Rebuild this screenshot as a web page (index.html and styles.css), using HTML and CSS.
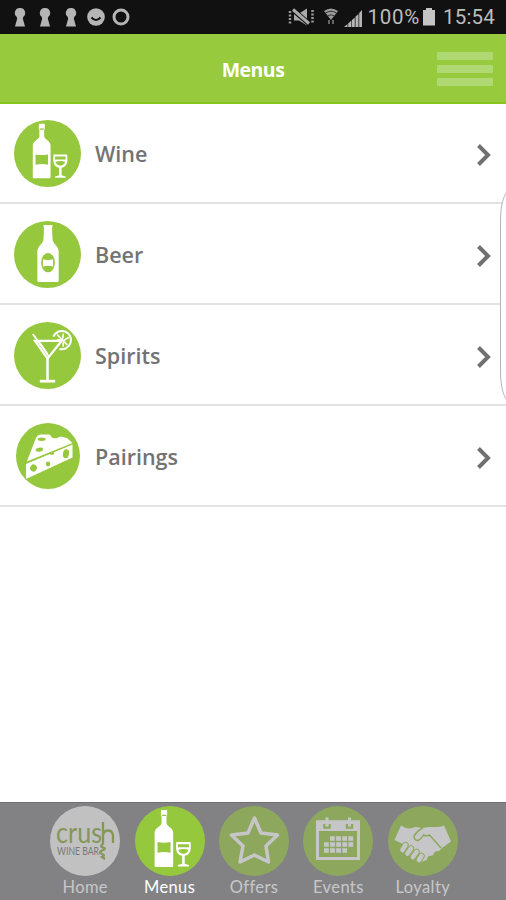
FILE: index.html
```
<!DOCTYPE html>
<html lang="en">
<head>
    <meta charset="UTF-8">
    <title>Menus</title>
    <link rel="stylesheet" href="styles.css">
</head>
<body>

<svg class="defs" width="0" height="0">
    <symbol id="wine" viewBox="0 0 66 66">
        <path fill="#fff" d="M24.500 3.700h5.800v5.300l-.6 1v6c0 3 6.300 4.500 6.300 9v31.500q0 1-1 1h-15.500q-1 0-1-1v-31.500c0-4.500 6.500-6 6.500-9v-6l-.6-1z"/>
        <path fill="#96c83e" d="M25.300 8.300h4.400v1.200h-4.400zM21.200 34q6 1.200 12.300 0v10q-6-1.200-12.300 0z"/>
        <path fill="#fff" d="M39 34h13.300c1 7 .2 12-5.400 13v7.500l4 1.200v1.300h-10.500v-1.300l4-1.200v-7.500c-5.600-1-6.400-6-5.400-13z"/>
        <path fill="#96c83e" d="M40.500 36h10.300l.1 3h-10.500zM41 41.200q4.700-1.500 9.300 0c-.7 5-8.600 5-9.300 0z"/>
    </symbol>
    <symbol id="keyhole" viewBox="0 0 12 19">
        <path fill="#b5b5b5" d="M6 0a5 5 0 0 1 3.400 8.800l-.6 1.700 2.200 8h-10l2.200-8-.6-1.700a5 5 0 0 1 3.400-8.800z"/>
    </symbol>
    <symbol id="chevron" viewBox="0 0 14 22">
        <path d="M1.500 1.500 11 11 1.500 20.500" fill="none" stroke="#707070" stroke-width="4"/>
    </symbol>
</svg>

<div class="app">
    <div class="status">
        <div class="notifications">
            <svg width="12" height="19"><use href="#keyhole"/></svg>
            <svg width="12" height="19"><use href="#keyhole"/></svg>
            <svg width="12" height="19"><use href="#keyhole"/></svg>
            <svg width="18" height="18" viewBox="0 0 18 18">
                <circle cx="9" cy="9" r="8.800" fill="#b5b5b5"/>
                <path d="M4.500 9.500q4.500 5 9 0" fill="none" stroke="#111" stroke-width="2"/>
            </svg>
            <svg class="ring" width="18" height="18" viewBox="0 0 18 18">
                <circle cx="9" cy="9" r="7" fill="none" stroke="#b5b5b5" stroke-width="3"/>
            </svg>
        </div>
        <div class="system">
            <svg class="mute" width="27" height="18" viewBox="0 0 27 18">
                <path fill="#aaa" d="M6 5.500h5l8-5v17l-8-5h-5z"/>
                <path d="M4 1 22 16.500" stroke="#111" stroke-width="5"/>
                <path d="M5 1.500 21 15.500" stroke="#aaa" stroke-width="3"/>
                <path d="M2 3v13M24.500 2v14" stroke="#999" stroke-width="2.500" stroke-dasharray="2 1.500"/>
            </svg>
            <svg class="wifi" width="16" height="18" viewBox="0 0 16 18">
                <path fill="#9a9a9a" d="M1 3q7-5 14 0l-7 9z"/>
                <path d="M2.500 5q5.500-3.500 11 0M4.500 8q3.500-2.500 7 0" fill="none" stroke="#333"/>
                <path d="M6 12v4M10 12v4" stroke="#666" stroke-width="2"/>
            </svg>
            <svg class="signal" width="19" height="19" viewBox="0 0 19 19">
                <path fill="#b5b5b5" d="M0 18l3.500-3v3zM4.200 14.500l3.200-3v6.500h-3.200zM8 11l2.800-2.500v9.500H8zM11.500 7.500l3-2.500v13h-3zM15.200 4l2.800-3v17h-2.800z"/>
            </svg>
            <span class="percent">100%</span>
            <svg class="battery" width="12" height="18" viewBox="0 0 12 18">
                <path fill="#c4c4c4" d="M3 0h6v2h3v15.500H0V2h3z"/>
            </svg>
            <span class="clock">15:54</span>
        </div>
    </div>

    <div class="header">
        <h1>Menus</h1>
        <div class="burger"><i></i><i></i><i></i></div>
    </div>

    <div class="list">
        <div class="row">
            <div class="disc"><svg viewBox="0 0 66 66"><use href="#wine"/></svg></div>
            <span class="wine">Wine</span>
            <svg class="arrow"><use href="#chevron"/></svg>
        </div>
        <div class="row">
            <div class="disc">
                <svg viewBox="0 0 66 66">
                    <path fill="#fff" d="M29 4h9l-.5 3.500.5 11c.5 4 6 6.500 6 11.500v28.500q0 1.500-1.500 1.500h-18q-1.500 0-1.500-1.500v-28.500c0-5 5.500-7.500 6-11.500l.5-11z"/>
                    <ellipse cx="33.500" cy="41" rx="6.800" ry="9.500" fill="#96c83e"/>
                    <path fill="#fff" d="M28.500 37.800q5 1.200 10 0v7q-5-1.200-10 0z"/>
                </svg>
            </div>
            <span class="beer">Beer</span>
            <svg class="arrow"><use href="#chevron"/></svg>
        </div>
        <div class="row">
            <div class="disc">
                <svg viewBox="0 0 66 66" fill="none" stroke="#fff">
                    <path d="M38.800 14.500a9 9 0 1 1 6 12" stroke-width="2"/>
                    <path d="M42.500 12.500 52.500 22.500M42 17.500h5M48.500 11.500l-.5 5M54 15l-4.500 3M48.500 20v4.500" stroke-width="1.600"/>
                    <path d="M20.700 18.500h26.300L33 36z" stroke-width="2.200"/>
                    <path d="M18.500 12l3.500 4.500 12 17M24 18.500l9 13" stroke-width="1.800"/>
                    <path d="M33 35v23" stroke-width="2.500"/>
                    <path d="M25.500 58.300h15" stroke-width="2.700"/>
                </svg>
            </div>
            <span class="spirits">Spirits</span>
            <svg class="arrow"><use href="#chevron"/></svg>
        </div>
        <div class="row">
            <div class="disc cheese">
                <svg viewBox="0 0 64 66">
                    <path fill="#fff" d="M10.800 38.500 20 15q1-3 4-3.500h9.500l2.500 3q3 1.700 6 0l2.500-1 6.500 1.500 5.500 5z"/>
                    <path fill="#fff" d="M10 41 56.500 21.500v13L10 56z"/>
                    <g fill="#96c83e">
                        <ellipse cx="25.700" cy="16.300" rx="4" ry="1.700"/>
                        <ellipse cx="23.300" cy="26.700" rx="3.800" ry="2" transform="rotate(-10 23.300 26.700)"/>
                        <ellipse cx="17.500" cy="45" rx="3.300" ry="3.600" transform="rotate(30 17.500 45)"/>
                        <ellipse cx="32" cy="41" rx="2.200" ry="2.400"/>
                        <ellipse cx="50" cy="30.700" rx="3" ry="4.500" transform="rotate(10 50 30.700)"/>
                        <ellipse cx="35.700" cy="30.300" rx="2.500" ry="1.500"/>
                    </g>
                </svg>
            </div>
            <span class="pairings">Pairings</span>
            <svg class="arrow"><use href="#chevron"/></svg>
        </div>
    </div>

    <div class="tabs">
        <div class="tab dim">
            <div class="disc home">
                <svg viewBox="0 0 70 70">
                    <text class="crush" x="6" y="37" textLength="46" lengthAdjust="spacingAndGlyphs">crus</text>
                    <text class="bar" x="7" y="49" textLength="42" lengthAdjust="spacingAndGlyphs">WINE BAR</text>
                    <path d="M53 16v21M53 29q1-4.500 5-4.500t5 4.500v8M54 37q-5 3-1 4.500 4 1.500-1 3-4 2 0 3.500 4 1 0 3l3 2" fill="none" stroke="#88a832" stroke-width="2.300"/>
                </svg>
            </div>
            <span>Home</span>
        </div>
        <div class="tab active">
            <div class="disc"><svg viewBox="0 0 66 66"><use href="#wine"/></svg></div>
            <span>Menus</span>
        </div>
        <div class="tab dim">
            <div class="disc">
                <svg viewBox="0 0 70 70">
                    <path d="M35.500 12 42 27 58.500 29 47 40 49.500 56 35.500 49 21 56 24 40 12.500 29 29 27z" fill="none" stroke="#fff" stroke-width="3.500" stroke-linejoin="round"/>
                </svg>
            </div>
            <span>Offers</span>
        </div>
        <div class="tab dim">
            <div class="disc">
                <svg viewBox="0 0 70 70">
                    <path d="M14.500 16h41v36.500h-41z" fill="none" stroke="#fff" stroke-width="3"/>
                    <path fill="#fff" d="M13 14.500h44V25H13z"/>
                    <path d="M21.500 18v3.500h5V18M44 18v3.500h5V18" fill="none" stroke="#96ca3c" stroke-width="2.500"/>
                    <path d="M24 11.500v9M46.500 11.500v9" stroke="#fff" stroke-width="3"/>
                    <path d="M27 32.500h24M21 38.500h30M21 44.500h23" stroke="#fff" stroke-width="4.500" stroke-dasharray="4.800 1.300"/>
                </svg>
            </div>
            <span>Events</span>
        </div>
        <div class="tab dim">
            <div class="disc">
                <svg viewBox="0 0 70 70">
                    <path fill="#fff" d="M13 19.500q4 3 9 3l6-1.500 6 1 7-1h7q5 0 8-1.500l7 16-9 6.500-3 3-4 .5-2.500 4-4 .5-2 4-4 1.500L15 38l-8.500-4z"/>
                    <path d="M35 21.500Q29 25 26 30q0 4.500 4 4.500 3-1 5.500-5.500 3 1.500 6 0L53 42" fill="none" stroke="#96ca3c" stroke-width="1.500"/>
                    <g stroke="#96ca3c" stroke-width="6.500" stroke-linecap="round">
                        <path d="M17.500 39l-3 5M23 42.500l-3.500 5M28.500 46l-3.500 5M33.500 50l-2.500 4"/>
                    </g>
                    <g stroke="#fff" stroke-width="4.600" stroke-linecap="round">
                        <path d="M17.500 39l-3 5M23 42.500l-3.500 5M28.500 46l-3.500 5M33.500 50l-2.500 4"/>
                    </g>
                </svg>
            </div>
            <span>Loyalty</span>
        </div>
    </div>

    <div class="edge-handle"></div>
</div>

</body>
</html>
```
FILE: styles.css
```
body {
    margin: 0;
    font-family: "Open Sans", sans-serif;
    background: #fff;
}

.defs {
    position: absolute;
}

.app {
    position: relative;
    width: 506px;
    height: 900px;
    overflow: hidden;
    display: flex;
    flex-direction: column;
}

/* status bar */
.status {
    height: 34px;
    background: #111;
    color: #bdbdbd;
    display: flex;
    justify-content: space-between;
    font-family: Roboto, sans-serif;
    font-size: 20.5px;
    line-height: 38px;
}

.notifications,
.system {
    display: flex;
    align-items: center;
}

.notifications {
    gap: 13.5px;
    padding-left: 13.5px;
}

.notifications svg:nth-child(4) {
    margin-left: -3px;
}

.notifications .ring {
    margin-left: -7px;
}

.system {
    padding-right: 11px;
}

.wifi {
    margin-left: 8px;
}

.signal {
    margin: 2px 5px 0 5px;
}

.percent {
    letter-spacing: 0.7px;
}

.battery {
    margin: 0 8px 0 3px;
}

.clock {
    letter-spacing: 0.2px;
}

/* header */
.header {
    box-sizing: border-box;
    height: 70px;
    background: #98ca3e;
    border-bottom: 2px solid #88c41e;
    display: grid;
    grid-template-columns: 1fr auto 1fr;
    align-items: center;
}

.header h1 {
    grid-column: 2;
    margin: 3px 0 0;
    color: #fff;
    font-size: 19.5px;
    line-height: 28px;
    font-weight: 700;
    letter-spacing: -0.5px;
}

.burger {
    justify-self: end;
    width: 56px;
    margin: 2px 13px 0 0;
    display: grid;
    gap: 5px;
}

.burger i {
    height: 8px;
    background: #b1d973;
    border-radius: 1px;
}

/* list */
.list {
    flex: 1;
}

.row {
    box-sizing: border-box;
    height: 101px;
    border-bottom: 2px solid #e2e2e2;
    padding: 1px 15px 0 14px;
    display: flex;
    align-items: center;
    color: #737373;
    font-size: 21.5px;
    font-weight: 600;
}

.row:first-child {
    height: 100px;
}

.disc {
    width: 67px;
    height: 67px;
    border-radius: 50%;
    background: #96c83e;
    flex: none;
}

.disc svg {
    display: block;
    width: 100%;
    height: 100%;
}

.cheese {
    width: 64px;
    height: 66px;
    margin: 0 1px 0 2px;
}

.row span {
    flex: 1;
    margin: 0 0 0 14px;
}

.arrow {
    width: 14px;
    height: 22px;
    margin-top: 3px;
}

/* tabs */
.tabs {
    box-sizing: border-box;
    height: 98px;
    background: #828285;
    border-top: 1px solid #6f6f72;
    padding: 3px 41px 0 43px;
    display: grid;
    grid-template-columns: repeat(5, 1fr);
}

.tab {
    display: flex;
    flex-direction: column;
    align-items: center;
    color: #fff;
    font-family: Lato, sans-serif;
    font-size: 16.5px;
    line-height: 20px;
    letter-spacing: 0.4px;
}

.tab .disc {
    width: 70px;
    height: 70px;
    margin-bottom: 1px;
}

.dim {
    opacity: 0.55;
}

.tab .home {
    background: #f5f5f5;
}

.crush {
    font-family: Lato, sans-serif;
    font-size: 28px;
    letter-spacing: 0;
    fill: #88a832;
}

.bar {
    font-family: Lato, sans-serif;
    font-size: 10.5px;
    letter-spacing: 0;
    fill: #707070;
}

/* edge panel outline on the right side of the screen */
.edge-handle {
    position: absolute;
    left: 500px;
    top: 190px;
    width: 20px;
    height: 212px;
    box-sizing: border-box;
    border: 1px solid #b5b5b5;
    border-radius: 12px / 36px;
    background: #fff;
}
```
